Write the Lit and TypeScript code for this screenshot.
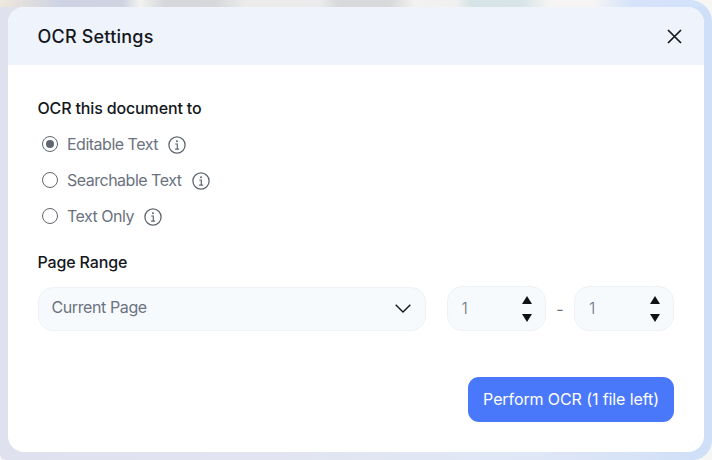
import { LitElement, html, css } from "lit";
import { customElement } from "lit/decorators.js";

const info = html`<svg class="info" viewBox="0 0 18 18" width="18" height="18" fill="none">
  <circle cx="9" cy="9" r="8.1" stroke="#5f6670" stroke-width="1.3"></circle>
  <circle cx="9" cy="5.2" r="1" fill="#5f6670"></circle>
  <path d="M7.2 8h2.1v5M7.1 13.1h4" stroke="#5f6670" stroke-width="1.2"></path>
</svg>`;

const spin = html`<div class="spin">
  <svg viewBox="0 0 10 8" width="10" height="8"><path d="M5 0 10 8H0Z" fill="#0f1115"></path></svg>
  <svg viewBox="0 0 10 8" width="10" height="8"><path d="M5 8 10 0H0Z" fill="#0f1115"></path></svg>
</div>`;

@customElement("app-root")
export class AppRoot extends LitElement {
  static styles = css`
    :host {
      display: block;
      width: 712px;
      height: 460px;
      overflow: hidden;
      background: #f6f6f5;
      font-family: Inter, "Liberation Sans", sans-serif;
    }
    .frame {
      box-sizing: border-box;
      height: 460px;
      padding: 7px 8px 8px 8px;
      border-radius: 0 22px 20px 6px;
      background:
        linear-gradient(90deg, #efe9df 0, #e6e2dc 15px, #ced3e3 60px, #cfd4e3 123px, #f3f2f0 140px, #d5d7db 165px, #d6d8db 215px, #ecebea 245px, #ecebeb 320px, #d8d9da 338px, #d8d9da 390px, #f3f2f1 415px, #f0f0ef 456px, #d6e4e7 470px, #d8e4e8 522px, #f6f5f3 550px, #f7f5f3 593px, #d5e3fb 630px, #d3e2fb 712px) top / 100% 7px no-repeat,
        linear-gradient(90deg, #dfe2ee 0, #e2e5f1 40%, #dfe7f6 75%, #cfdff8 100%);
    }
    .dialog {
      height: 445px;
      border-radius: 16px;
      background: #fff;
      overflow: hidden;
      display: flex;
      flex-direction: column;
    }
    .head {
      height: 58px;
      flex: none;
      background: #eff3fb;
      display: flex;
      align-items: center;
      justify-content: space-between;
      padding: 0 22px 0 29.5px;
      color: #14171c;
      font-size: 18px;
      font-weight: 500;
      letter-spacing: 0.2px;
    }
    .close { display: block; }
    .body {
      flex: 1;
      display: flex;
      flex-direction: column;
      padding: 33px 30px 30px 29.5px;
    }
    .label {
      font-size: 16px;
      font-weight: 500;
      color: #14171c;
      line-height: 20px;
      letter-spacing: -0.15px;
    }
    .opts {
      display: flex;
      flex-direction: column;
      gap: 14px;
      margin-top: 15px;
      padding-left: 4.5px;
    }
    .opt {
      display: flex;
      align-items: center;
      height: 22px;
      font-size: 16px;
      color: #6b7280;
      letter-spacing: -0.5px;
    }
    .radio {
      box-sizing: border-box;
      width: 16px;
      height: 16px;
      border-radius: 50%;
      border: 1.5px solid #5f6670;
      margin-right: 9px;
      display: flex;
      align-items: center;
      justify-content: center;
      flex: none;
    }
    .radio.on::after {
      content: "";
      width: 8px;
      height: 8px;
      border-radius: 50%;
      background: #5f6670;
    }
    .info { margin-left: 10.5px; margin-top: 1px; }
    .range-label { margin-top: 25px; }
    .range {
      display: flex;
      align-items: center;
      margin-top: 14px;
      height: 45px;
    }
    .field {
      box-sizing: border-box;
      background: #f7fafd;
      border: 1px solid #eef1f6;
      border-radius: 15px;
      display: flex;
      align-items: center;
      justify-content: space-between;
      font-size: 16px;
      color: #6b7280;
      letter-spacing: -0.4px;
    }
    .select { width: 388.5px; height: 44px; padding: 0 14px 0 13px; }
    .select span { padding-bottom: 3px; }
    .num { width: 99.5px; height: 45px; padding: 0 13px 0 14px; font-weight: 300; }
    .num > span { padding-bottom: 2px; }
    .gap { width: 20.5px; flex: none; }
    .dash { width: 28px; text-align: center; font-size: 16px; color: #6b7280; }
    .spin { display: flex; flex-direction: column; gap: 10px; }
    .spin svg { display: block; }
    .foot { margin-top: auto; display: flex; justify-content: flex-end; }
    .btn {
      width: 206px;
      height: 45px;
      border: 0;
      border-radius: 11px;
      background: #4a78fb;
      color: #fff;
      font: 400 16px Inter, "Liberation Sans", sans-serif;
      letter-spacing: -0.1px;
      padding: 0 0 2px;
    }
  `;

  render() {
    const opts = [
      { t: "Editable Text", on: true },
      { t: "Searchable Text", on: false },
      { t: "Text Only", on: false },
    ];
    return html`<div class="frame"><div class="dialog">
      <div class="head">
        <span>OCR Settings</span>
        <svg class="close" viewBox="0 0 15 15" width="15" height="15" fill="none">
          <path d="M1 1 14 14M14 1 1 14" stroke="#14171c" stroke-width="1.7"></path>
        </svg>
      </div>
      <div class="body">
        <div class="label">OCR this document to</div>
        <div class="opts">
          ${opts.map(o => html`<div class="opt"><span class="radio ${o.on ? "on" : ""}"></span>${o.t}${info}</div>`)}
        </div>
        <div class="label range-label">Page Range</div>
        <div class="range">
          <div class="field select">
            <span>Current Page</span>
            <svg viewBox="0 0 16 9" width="16" height="9" fill="none"><path d="M.7.7 8 8 15.3.7" stroke="#14171c" stroke-width="1.4"></path></svg>
          </div>
          <div class="gap"></div>
          <div class="field num"><span>1</span>${spin}</div>
          <div class="dash">-</div>
          <div class="field num"><span>1</span>${spin}</div>
        </div>
        <div class="foot"><button class="btn">Perform OCR (1 file left)</button></div>
      </div>
    </div></div>`;
  }
}
